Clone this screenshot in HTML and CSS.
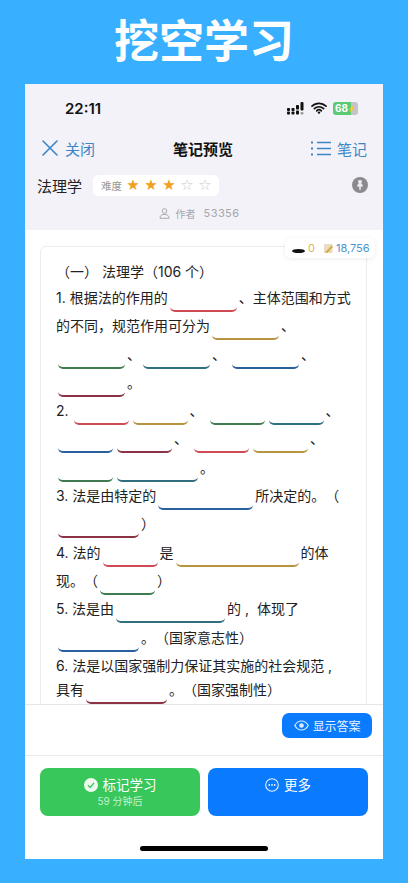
FILE: index.html
```html
<!DOCTYPE html>
<html lang="zh">
<head>
<meta charset="utf-8">
<title>挖空学习</title>
<link rel="stylesheet" href="styles.css">
</head>
<body>
<h1 class="banner">挖空学习</h1>
<main class="screen">
  <header class="top">
    <div class="status">
      <span class="time">22:11</span>
      <div class="status-icons">
        <svg width="18" height="13" viewBox="0 0 18 13"><g fill="#111"><rect x="0" y="6" width="3" height="3" rx=".8"/><rect x="0" y="9.500" width="3" height="3" rx=".8"/><rect x="4.500" y="6" width="3" height="3" rx=".8"/><rect x="4.500" y="9.500" width="3" height="3" rx=".8"/><rect x="9" y="3" width="3" height="4.500" rx=".8"/><rect x="9" y="8.500" width="3" height="4" rx=".8"/><rect x="13.500" y="0" width="3" height="8.500" rx="1"/><rect x="13.500" y="10" width="3" height="2.500" rx="1" fill="#999"/></g></svg>
        <svg width="16" height="12" viewBox="0 0 16 12"><path d="M1 4.200a10 10 0 0 1 14 0M3.400 6.600a6.600 6.600 0 0 1 9.200 0M5.700 8.800a3.300 3.300 0 0 1 4.600 0" fill="none" stroke="#111" stroke-width="1.700" stroke-linecap="round"/><circle cx="8" cy="10.600" r="1.200" fill="#111"/></svg>
        <span class="battery"><span class="battery-level">68</span><span class="battery-bolt">⚡</span></span>
      </div>
    </div>
    <nav class="nav">
      <a class="nav-link">
        <svg width="16" height="16" viewBox="0 0 16 16"><path d="M1 1l14 14M15 1L1 15" stroke="#3d86c6" stroke-width="1.600" stroke-linecap="round"/></svg>
        <span>关闭</span>
      </a>
      <span class="nav-title">笔记预览</span>
      <a class="nav-link">
        <svg width="20" height="15" viewBox="0 0 20 15"><path d="M6 1.500h14M6 7.500h14M6 13.500h14" stroke="#3d86c6" stroke-width="1.400"/><path d="M0 1.500h2M0 7.500h2M0 13.500h2" stroke="#3d86c6" stroke-width="1.800"/></svg>
        <span class="nav-right-label">笔记</span>
      </a>
    </nav>
    <div class="meta">
      <span class="subject">法理学</span>
      <div class="difficulty">
        <span class="difficulty-label">难度</span>
        <span class="stars"><span class="star on">★</span><span class="star on">★</span><span class="star on">★</span><span class="star">☆</span><span class="star">☆</span></span>
      </div>
      <svg class="pin" width="16" height="16" viewBox="0 0 16 16"><circle cx="8" cy="8" r="8" fill="#8b8b8f"/><path d="M6.300 3.200h3.400l.3 1.500-.8 1.600 1.600 1.900-.3 1.600H5.500l-.3-1.600 1.600-1.900-.8-1.600zM7.200 10h1.600v2.800H7.200z" fill="#eee"/></svg>
    </div>
    <div class="author">
      <svg width="11" height="11" viewBox="0 0 11 11"><circle cx="5.500" cy="3" r="2.300" fill="none" stroke="#aaa"/><path d="M1 10.300c0-2.600 1.600-3.400 2.800-3.800h3.400c1.200.4 2.800 1.200 2.800 3.800z" fill="none" stroke="#aaa"/></svg>
      <span class="author-label">作者</span>
      <span class="author-id">53356</span>
    </div>
  </header>

  <section class="content">
    <div class="counts">
      <span class="puck"></span>
      <span class="count-zero">0</span>
      <svg width="11" height="11" viewBox="0 0 11 11"><rect x="1" y="1" width="8.500" height="9" rx="1" fill="#e9dcc0"/><path d="M3 8.500l5.500-6 1.500 1.200-5.500 6-2 .3z" fill="#d9a93f"/></svg>
      <span class="count-notes">18,756</span>
    </div>
    <article class="card">
      <p class="head">（一） 法理学（106 个）</p>
      <p class="para">1. 根据法的作用的<span class="blank red w67"></span>、主体范围和方式的不同，规范作用可分为<span class="blank gold w67"></span>、<span class="blank green w67"></span>、<span class="blank teal w67"></span>、<span class="blank blue w67 gap"></span>、<span class="blank maroon w67"></span>。</p>
      <p class="para">2.<span class="blank red w55 gap-s"></span><span class="blank gold w55"></span>、<span class="blank green w55 gap"></span><span class="blank teal w55"></span>、<span class="blank blue w55"></span><span class="blank maroon w55"></span>、<span class="blank red w55 gap"></span><span class="blank gold w55"></span>、<span class="blank green w55"></span><span class="blank teal w81"></span>。</p>
      <p class="para">3. 法是由特定的<span class="blank blue w95"></span>所决定的。（<span class="blank maroon w81"></span>）</p>
      <p class="para">4. 法的<span class="blank red w55"></span>是<span class="blank gold w123"></span>的体现。（<span class="blank green w55"></span>）</p>
      <p class="para">5. 法是由<span class="blank teal w109"></span>的&nbsp;, &nbsp;体现了<span class="blank blue w81"></span>。（国家意志性）</p>
      <p class="para tight">6. 法是以国家强制力保证其实施的社会规范 ,<br>具有<span class="blank maroon w81"></span>。（国家强制性）</p>
    </article>
  </section>

  <div class="toolbar">
    <button class="show-answer">
      <svg width="15" height="11" viewBox="0 0 15 11"><path d="M.8 5.500C2.500 2.300 5 1 7.500 1s5 1.300 6.700 4.500C12.500 8.700 10 10 7.500 10S2.500 8.700.8 5.500z" fill="none" stroke="#dcefff" stroke-width="1.200"/><circle cx="7.500" cy="5.500" r="2.300" fill="#dcefff"/></svg>
      <span>显示答案</span>
    </button>
  </div>

  <footer class="actions">
    <div class="action-row">
      <button class="action green-btn">
        <span class="action-main">
          <svg width="14" height="14" viewBox="0 0 14 14"><circle cx="7" cy="7" r="7" fill="#eef9f0"/><path d="M4 7.300l2.200 2.200L10 4.800" fill="none" stroke="#38c75b" stroke-width="1.300"/></svg>
          <span>标记学习</span>
        </span>
        <span class="action-sub">59 分钟后</span>
      </button>
      <button class="action blue-btn">
        <span class="action-main">
          <svg width="14" height="14" viewBox="0 0 14 14"><circle cx="7" cy="7" r="6.300" fill="none" stroke="#e6f2ff" stroke-width="1.100"/><g fill="#e6f2ff"><circle cx="4.300" cy="7" r=".9"/><circle cx="7" cy="7" r=".9"/><circle cx="9.700" cy="7" r=".9"/></g></svg>
          <span>更多</span>
        </span>
      </button>
    </div>
    <div class="home-bar"></div>
  </footer>
</main>
</body>
</html>
```

FILE: styles.css
```css
* { box-sizing: border-box; }
html, body { margin: 0; padding: 0; }
body {
  width: 408px;
  height: 883px;
  overflow: hidden;
  background: #38b0ff;
  font-family: Inter, "Noto Sans CJK SC", sans-serif;
  color: #222;
}
.banner {
  margin: 0;
  height: 84px;
  padding-top: 12px;
  text-align: center;
  font-size: 45px;
  line-height: 60px;
  font-weight: 700;
  color: #fff;
}
.screen {
  margin: 0 25px;
  height: 775px;
  display: flex;
  flex-direction: column;
  background: #fff;
}
.top {
  height: 146px;
  flex: none;
  background: #f2f2f8;
  padding: 0 16px 0 12px;
}
.status {
  height: 48px;
  display: flex;
  align-items: center;
  justify-content: space-between;
  padding: 0 0 0 28px;
}
.time { font-size: 15px; font-weight: 600; color: #111; }
.status-icons { display: flex; align-items: center; gap: 6px; padding-right: 9px; }
.battery {
  display: flex;
  align-items: center;
  width: 25px;
  height: 13px;
  border-radius: 3px;
  background: linear-gradient(90deg, #5cc973 72%, #c5c5c8 72%);
  color: #fff;
  font-size: 10px;
  font-weight: 700;
  padding-left: 2px;
  overflow: hidden;
}
.battery-level { line-height: 13px; }
.battery-bolt { font-size: 6px; line-height: 13px; }
.nav {
  height: 32px;
  display: flex;
  align-items: center;
  justify-content: space-between;
  padding-left: 5px;
}
.nav-link {
  display: flex;
  align-items: center;
  gap: 7px;
  color: #3d86c6;
  font-size: 15px;
}
.nav-right-label { margin-left: -1px; }
.nav-title { font-size: 15px; font-weight: 600; color: #111; margin-left: 0; }
.meta {
  display: flex;
  align-items: center;
  height: 28px;
  margin-top: 7px;
}
.subject { font-size: 15px; color: #222; width: 56px; }
.difficulty {
  display: flex;
  align-items: center;
  width: 126px;
  height: 21px;
  background: #fff;
  border-radius: 6px;
  padding-left: 8px;
}
.difficulty-label { font-size: 10.500px; color: #999; width: 23px; }
.stars { display: flex; }
.star {
  width: 18px;
  text-align: center;
  font-size: 15px;
  line-height: 21px;
  color: #c9c9cc;
  font-family: "DejaVu Sans", sans-serif;
}
.star.on { color: #f0a024; }
.pin { margin-left: auto; margin-right: -1px; }
.author {
  display: flex;
  align-items: center;
  justify-content: center;
  gap: 6px;
  height: 16px;
  margin-top: 6px;
  color: #a6a6aa;
  font-size: 10px;
  padding-right: 6px;
}
.author-id { font-size: 11px; letter-spacing: .4px; margin-left: 2px; }
.content {
  flex: 1 1 0;
  min-height: 0;
  position: relative;
  overflow: hidden;
  padding: 16px 16px 0 15px;
  border-bottom: 1px solid #e6e6e8;
}
.counts {
  position: absolute;
  top: 8px;
  right: 8px;
  height: 20px;
  width: 90px;
  display: flex;
  align-items: center;
  padding-left: 7px;
  gap: 3px;
  background: #fff;
  border-radius: 6px;
  box-shadow: 0 1px 5px rgba(0,0,0,.08);
  font-size: 11px;
}
.puck {
  width: 13px;
  height: 4px;
  margin-top: 5px;
  background: #111;
  border-radius: 50%;
}
.count-zero { color: #e2b45a; margin-right: 5px; }
.count-notes { color: #4a94cc; font-size: 11px; margin-left: -1px; }
.card {
  border: 1px solid #ececee;
  border-radius: 6px;
  padding: 12px 14px 0 15px;
  font-size: 14px;
  min-height: 470px;
  text-spacing-trim: space-all;
}
.head { margin: 0; line-height: 25px; }
.para { margin: 0; line-height: 28.300px; }
.para.tight { margin-top: 2px; line-height: 24px; }
.blank {
  display: inline-block;
  height: 12px;
  vertical-align: -9px;
  margin: 0 2px;
  border-bottom: 2px solid;
  border-radius: 0 0 5px 5px;
}
.gap { margin-left: 6px; }
.gap-s { margin-left: 5px; }
.w55 { width: 55px; }
.w67 { width: 67px; }
.w81 { width: 81px; }
.w95 { width: 95px; }
.w109 { width: 109px; }
.w123 { width: 123px; }
.red { border-color: #cf4a55; }
.gold { border-color: #b8943f; }
.green { border-color: #3f7a50; }
.teal { border-color: #2f6f80; }
.blue { border-color: #2a5f9e; }
.maroon { border-color: #8b3345; }
.toolbar {
  height: 51px;
  flex: none;
  display: flex;
  justify-content: flex-end;
  align-items: flex-start;
  padding: 8px 11px 0 0;
  border-bottom: 1px solid #e9e9ec;
}
button {
  border: 0;
  padding: 0;
  font-family: inherit;
  color: #fff;
}
.show-answer {
  width: 90px;
  height: 25px;
  display: flex;
  align-items: center;
  justify-content: center;
  gap: 4px;
  background: #0a7aff;
  border-radius: 7px;
  font-size: 12px;
  letter-spacing: -.1px;
  color: #eaf4ff;
}
.actions {
  flex: none;
  height: 103px;
  padding: 12px 15px 0;
  display: flex;
  flex-direction: column;
}
.action-row { display: flex; gap: 8px; }
.action {
  flex: 1;
  height: 48px;
  border-radius: 8px;
  display: flex;
  flex-direction: column;
  align-items: center;
  padding-top: 7px;
}
.green-btn { background: #38c75b; }
.blue-btn { background: #0a7aff; }
.action-main {
  display: flex;
  align-items: center;
  gap: 5px;
  font-size: 13.500px;
  line-height: 20px;
}
.action-sub { font-size: 10px; line-height: 13px; color: #c6f0d0; }
.home-bar {
  width: 128px;
  height: 5px;
  margin: 30px auto 0;
  background: #000;
  border-radius: 3px;
}
```
